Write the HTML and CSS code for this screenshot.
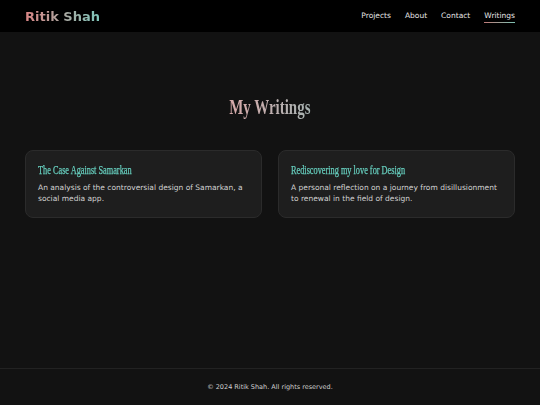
FILE: index.html
```html
<!DOCTYPE html>
<html lang="en">
<head>
<meta charset="utf-8">
<title>Ritik Shah — Writings</title>
<link rel="stylesheet" href="styles.css">
</head>
<body>
<div class="page">
  <header class="header">
    <a class="logo" href="#">Ritik Shah</a>
    <nav class="nav">
      <a href="#">Projects</a>
      <a href="#">About</a>
      <a href="#">Contact</a>
      <a href="#" class="active">Writings</a>
    </nav>
  </header>
  <main class="main">
    <div class="title-wrap"><h1 class="title">My Writings</h1></div>
    <div class="cards">
      <article class="card">
        <h2 class="card-title">The Case Against Samarkan</h2>
        <p class="card-text">An analysis of the controversial design of Samarkan, a social media app.</p>
      </article>
      <article class="card">
        <h2 class="card-title">Rediscovering my love for Design</h2>
        <p class="card-text">A personal reflection on a journey from disillusionment to renewal in the field of design.</p>
      </article>
    </div>
  </main>
  <footer class="footer">© 2024 Ritik Shah. All rights reserved.</footer>
</div>
</body>
</html>
```

FILE: styles.css
```css
* { box-sizing: border-box; margin: 0; padding: 0; }
html, body { height: 100%; }
body {
  background: #121212;
  color: #e0e0e0;
  font-family: "DejaVu Sans", "Noto Sans", sans-serif;
}
.page {
  min-height: 100vh;
  display: flex;
  flex-direction: column;
}
.header {
  height: 32px;
  background: #000;
  display: flex;
  align-items: center;
  justify-content: space-between;
  padding: 0 25px;
}
.logo {
  font-size: 13px;
  font-weight: bold;
  text-decoration: none;
  background: linear-gradient(90deg, #d98585, #7fc7bb);
  -webkit-background-clip: text;
  background-clip: text;
  color: transparent;
}
.nav {
  display: flex;
  gap: 14px;
}
.nav a {
  font-size: 7.5px;
  color: #e6e6e6;
  text-decoration: none;
  position: relative;
  padding-bottom: 1px;
}
.nav a.active::after {
  content: "";
  position: absolute;
  left: 0;
  right: 0;
  bottom: -2px;
  height: 1px;
  background: linear-gradient(90deg, #c07a78, #7cc1b2);
}
.main {
  flex: 1;
  padding: 62px 25px 0;
}
.title-wrap {
  display: flex;
  justify-content: center;
  margin-bottom: 30px;
}
.title {
  font-family: "Liberation Serif", "Times New Roman", serif;
  font-weight: bold;
  font-size: 22px;
  line-height: 26px;
  transform: scaleX(0.68);
  background: linear-gradient(90deg, #d8aaaa, #a6b2b1);
  -webkit-background-clip: text;
  background-clip: text;
  color: transparent;
}
.cards {
  display: grid;
  grid-template-columns: 1fr 1fr;
  gap: 16px;
}
.card {
  background: #1e1e1e;
  border: 1px solid #2b2b2b;
  border-radius: 8px;
  padding: 12px 12px 13px;
  height: 68px;
}
.card-title {
  font-family: "Liberation Serif", "Times New Roman", serif;
  font-weight: normal;
  font-size: 11.5px;
  line-height: 15px;
  transform: scaleX(0.72);
  transform-origin: left center;
  white-space: nowrap;
  color: #66cdbd;
  -webkit-text-stroke: 0.25px #66cdbd;
  margin-bottom: 5px;
}
.card-text {
  font-size: 7.5px;
  line-height: 10.5px;
  color: #d2d2d2;
}
.footer {
  height: 37px;
  border-top: 1px solid #222;
  display: flex;
  align-items: center;
  justify-content: center;
  font-size: 6.5px;
  color: #cfcfcf;
}
```
